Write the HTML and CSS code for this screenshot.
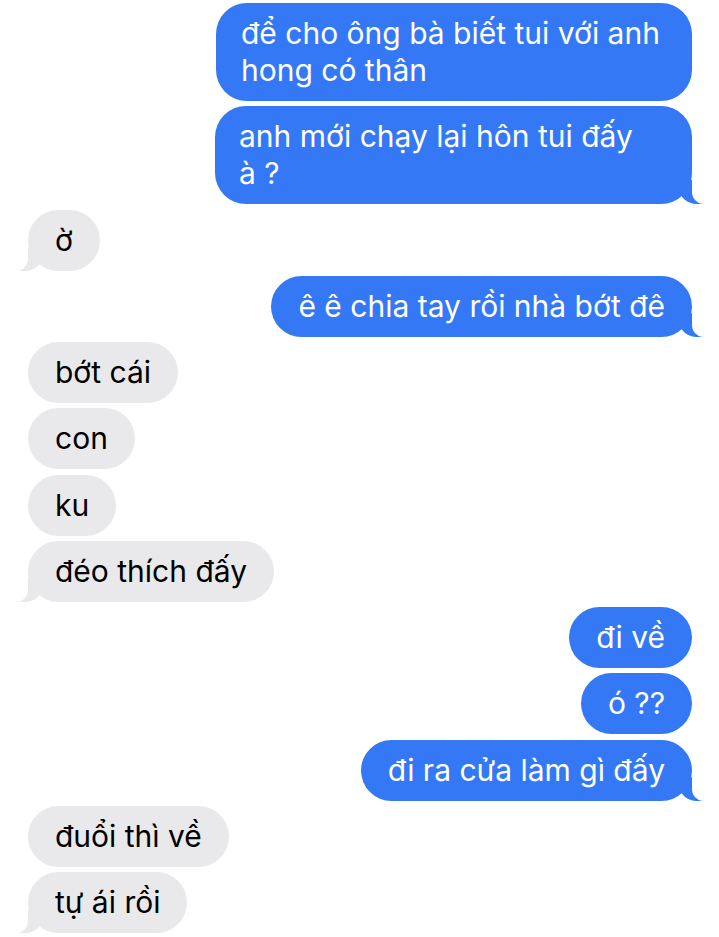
FILE: index.html
```html
<!DOCTYPE html>
<html lang="vi">
<head>
  <meta charset="UTF-8" />
  <meta name="viewport" content="width=device-width, initial-scale=1.0" />
  <title>Tin nhắn</title>
  <link rel="stylesheet" href="styles.css">
</head>
<body>
  <div class="chat">
    <div class="bubble me multi">để cho ông bà biết tui với anh<br>hong có thân</div>
    <div class="bubble me multi tail">anh mới chạy lại hôn tui đấy<br>à ?</div>

    <div class="bubble them tail">ờ</div>

    <div class="bubble me tail">ê ê chia tay rồi nhà bớt đê</div>

    <div class="bubble them">bớt cái</div>
    <div class="bubble them">con</div>
    <div class="bubble them">ku</div>
    <div class="bubble them tail">đéo thích đấy</div>

    <div class="bubble me">đi về</div>
    <div class="bubble me">ó ??</div>
    <div class="bubble me tail">đi ra cửa làm gì đấy</div>

    <div class="bubble them">đuổi thì về</div>
    <div class="bubble them tail">tự ái rồi</div>
  </div>
</body>
</html>
```
FILE: styles.css
```css
:root {
  --blue: #3478f6;
  --gray: #e9e9eb;
  --bg: #ffffff;
}

body {
  margin: 0;
  padding: 0;
  background: var(--bg);
  font-family: Inter, 'Noto Sans', sans-serif;
}

.chat {
  display: flex;
  flex-direction: column;
  gap: 5.25px;
  padding: 3px 27px 0 28px;
}

.bubble {
  position: relative;
  max-width: 477px;
  box-sizing: border-box;
  padding: 12px 27px;
  font-size: 30px;
  line-height: 37px;
  border-radius: 31px;
  word-wrap: break-word;
}

.multi {
  width: 476px;
  padding-left: 25px;
  padding-right: 25px;
}

.multi.tail {
  width: 477px;
  padding-left: 24px;
}

.me {
  align-self: flex-end;
  background: var(--blue);
  color: #fff;
}

.them {
  align-self: flex-start;
  background: var(--gray);
  color: #000;
}

/* la cola del globo */
.tail::before,
.tail::after {
  content: "";
  position: absolute;
  bottom: 0;
  height: 24px;
}

.me.tail::before {
  z-index: 0;
  right: -11px;
  width: 24px;
  background: var(--blue);
  border-bottom-left-radius: 18px 16px;
}

.me.tail::after {
  z-index: 1;
  right: -12px;
  width: 12px;
  background: var(--bg);
  border-bottom-left-radius: 12px;
}

.them.tail::before {
  z-index: 0;
  left: -9px;
  width: 24px;
  background: var(--gray);
  border-bottom-right-radius: 18px 16px;
}

.them.tail::after {
  z-index: 1;
  left: -12px;
  width: 12px;
  background: var(--bg);
  border-bottom-right-radius: 12px;
}
```
